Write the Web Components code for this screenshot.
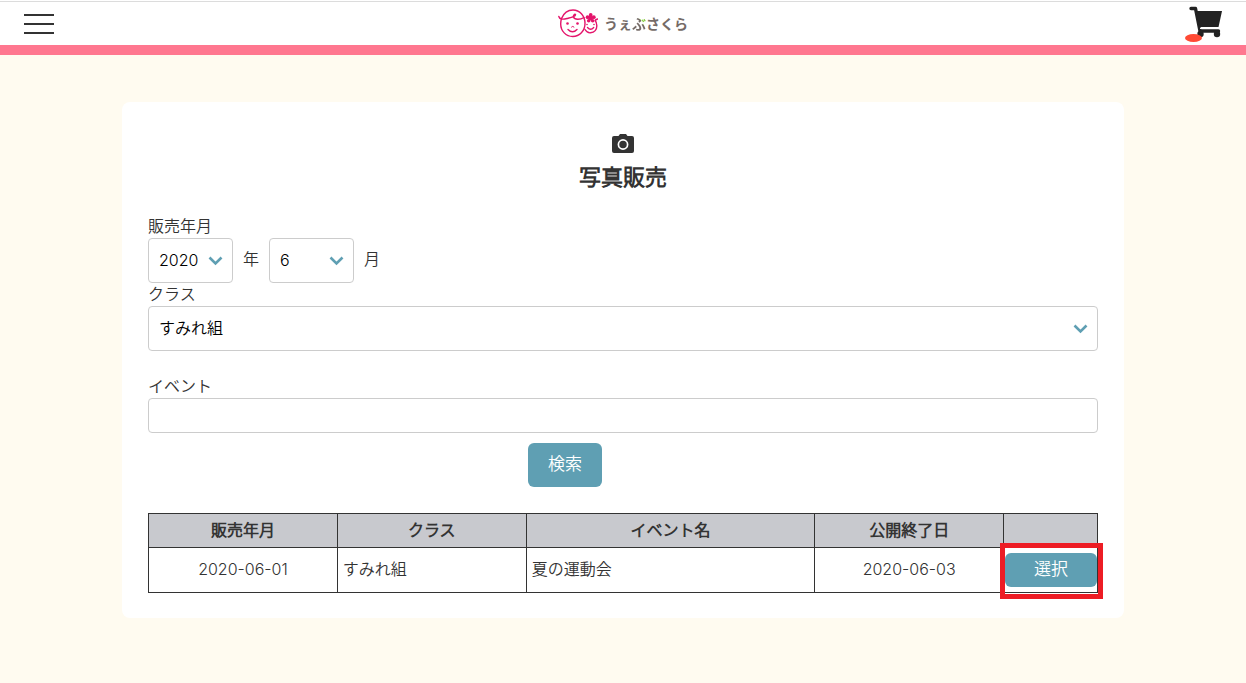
<!DOCTYPE html>
<html lang="ja">
<head>
<meta charset="utf-8">
<meta name="viewport" content="width=device-width, initial-scale=1">
<title>写真販売 | うぇぶさくら</title>
<style>
  :root { --accent: #5f9fb3; --ink: #333; --line: #ccc; }
  body { margin: 0; min-height: 100vh; background: #fffbf0; color: var(--ink);
    font: 350 16px/24px Inter, "Noto Sans CJK JP DemiLight", "Noto Sans CJK JP", sans-serif; }
</style>
</head>
<body>
<site-header></site-header>
<page-card heading="写真販売">
  <sale-search></sale-search>
  <sale-results></sale-results>
</page-card>

<template id="site-header">
  <style>
    :host { display: block; }
    header { box-sizing: border-box; height: 55px; margin-bottom: 47px; padding: 0 24px; display: grid;
      grid-template-columns: 1fr auto 1fr; align-items: center; background: #fff;
      border-bottom: 10px solid #ff778f; box-shadow: inset 0 1px #fff, inset 0 2px #dcdcdc; }
    button { border: 0; padding: 0; background: none; width: 30px; height: 22px; display: grid; margin-top: 2px; }
    svg { display: block; }
    .logo { display: flex; align-items: center; gap: 6px; color: #756b67; text-decoration: none;
      font: 700 14px/20px "Noto Sans CJK JP", sans-serif; }
    .bu { background: linear-gradient(to top right, #756b67 62%, #7ac62c 62%); -webkit-background-clip: text;
      background-clip: text; color: transparent; }
    .cart { justify-self: end; margin-top: 2px; }
  </style>
  <header>
    <button type="button" aria-label="メニュー">
      <svg width="30" height="22" viewBox="0 0 30 22"><path d="M0 2h30M0 11h30M0 20h30" stroke="#333" stroke-width="2"/></svg>
    </button>
    <a class="logo" href="#">
      <svg width="40" height="30" viewBox="0 0 40 30" fill="none" stroke="#e4146b" stroke-width="1.4" stroke-linecap="round">
        <path d="M3.500 10.500C6 4.500 10 2 15 2C21.500 2 27 7.500 27 15.500C27 23 21.500 28.500 14.700 28.500C8 28.500 2.700 23 2.700 16C2.700 14 3 12 3.500 10.500Z"/>
        <path d="M0.800 8.500C1.500 11.500 5 11.500 9 10.500C13 9.500 18 8.500 17.500 6.500C17 5.500 15 7 15.500 9C16.500 12 22 12 26 9.500"/>
        <path d="M27 21.500C28.500 24 30.500 25 32.500 24.800C36.500 24.500 39 21.500 38.800 17.500C38.700 15.500 38 13.500 37.200 12.500M37.500 12L39.500 11"/>
        <path d="M10 21.500Q14.500 26 19 21.500M29.500 19.500Q32.700 23 35.700 19.500"/>
        <path d="M13.500 19Q14.700 17.500 16 19" stroke-width="1"/>
        <g fill="#e4146b" stroke="none"><circle cx="9.500" cy="15.500" r="1.300"/><circle cx="19.500" cy="15.500" r="1.300"/><circle cx="29" cy="16.500" r="0.800"/><circle cx="36" cy="16.500" r="0.800"/>
        <circle cx="32.700" cy="7" r="1.900"/><circle cx="35.800" cy="9.200" r="1.900"/><circle cx="34.700" cy="12.700" r="1.800"/><circle cx="30.700" cy="12.700" r="1.800"/><circle cx="29.600" cy="9.200" r="1.900"/><circle cx="32.700" cy="10" r="2.400"/></g>
      </svg>
      <span>うぇ<span class="bu">ぶ</span>さくら</span>
    </a>
    <a class="cart" href="#" aria-label="カート">
      <svg width="37" height="36" viewBox="1 0 37 36">
        <path d="M7 2.500h4.500l4.500 22.500h18.500" fill="none" stroke="#222" stroke-width="3.400" stroke-linejoin="round" stroke-linecap="round"/>
        <path d="M12 5h26l-3.500 16H15.500z" fill="#222"/>
        <path d="M16 22.300h18.500" stroke="#fff" stroke-width="1.400"/>
        <circle cx="16.500" cy="28" r="3.200" fill="#222"/><circle cx="33" cy="28" r="3.200" fill="#222"/>
        <ellipse cx="9.500" cy="32" rx="8.500" ry="4" fill="#ff4a35"/>
      </svg>
    </a>
  </header>
</template>

<template id="page-card">
  <style>
    :host { display: block; margin: 0 122px 48px; }
    main { background: #fff; border-radius: 8px; padding: 30px 26px 25px; }
    svg { display: block; margin: 0 auto; }
    h1 { margin: 6px 0 23px; font-size: 22px; line-height: 30px; font-weight: 700; text-align: center; }
  </style>
  <main>
    <svg width="24" height="24" viewBox="0 0 24 24">
      <path d="M3 4h4.500l1.500-2h6l1.500 2H21a2 2 0 0 1 2 2v13a2 2 0 0 1-2 2H3a2 2 0 0 1-2-2V6a2 2 0 0 1 2-2z" fill="#333"/>
      <circle cx="12" cy="12.500" r="4.600" fill="none" stroke="#fff" stroke-width="1.700"/>
    </svg>
    <h1></h1>
    <slot></slot>
  </main>
</template>

<template id="select-field">
  <style>
    :host { display: block; position: relative; }
    select { appearance: none; box-sizing: border-box; display: block; width: 100%; height: 45px; padding: 0 32px 2px 10px;
      border: 1px solid var(--line); border-radius: 4px; background: #fff; color: #000; font: inherit; }
    svg { position: absolute; right: 10px; top: 18px; pointer-events: none; }
  </style>
  <select></select>
  <svg width="15" height="10" viewBox="0 0 15 10"><path d="M1.500 1.500l6 6 6-6" fill="none" stroke="#5f9fb3" stroke-width="2.600"/></svg>
</template>

<template id="sale-search">
  <style>
    :host { display: block; }
    .label { display: block; line-height: 23px; }
    .period { display: flex; align-items: center; gap: 10px; }
    .period select-field { width: 85px; }
    .period span { padding-bottom: 4px; }
    .event { margin-top: 24px; }
    input { box-sizing: border-box; display: block; width: 100%; height: 35px; padding: 0 10px;
      border: 1px solid var(--line); border-radius: 4px; background: #fff; font: inherit; }
    button { display: block; margin: 10px 0 26px 40%; height: 44px; padding: 0 20px 2px; border: 0; border-radius: 6px;
      background: var(--accent); color: #fff; font: inherit; font-size: 17px; font-weight: 400; }
  </style>
  <form>
    <span class="label">販売年月</span>
    <div class="period">
      <select-field label="販売年" value="2020"></select-field><span>年</span>
      <select-field label="販売月" value="6"></select-field><span>月</span>
    </div>
    <span class="label">クラス</span>
    <select-field label="クラス" value="すみれ組"></select-field>
    <label class="label event" for="event">イベント</label>
    <input id="event" type="text">
    <button type="button">検索</button>
  </form>
</template>

<template id="sale-results">
  <style>
    :host { display: block; }
    table { width: 100%; table-layout: fixed; border-collapse: collapse; }
    th, td { border: 1px solid var(--ink); padding: 0 5px 2px; }
    th { height: 31px; background: #c8c9ce; font-weight: 700; }
    td { height: 42px; }
    .date { text-align: center; }
    .action { height: 44px; padding: 0 0 0 1px; position: relative; }
    .action::after { content: ""; position: absolute; inset: -5px -6px -7px -4px; border: 5px solid #ed1c24; pointer-events: none; }
    button { display: block; width: 100%; height: 34px; border: 0; border-radius: 6px; padding: 0 0 2px;
      background: var(--accent); color: #fff; font: inherit; font-size: 17px; font-weight: 400; }
    .narrow { width: 9.9%; }
    .medium { width: 19.9%; }
  </style>
  <table>
    <colgroup><col class="medium"><col class="medium"><col><col class="medium"><col class="narrow"></colgroup>
    <thead><tr><th>販売年月</th><th>クラス</th><th>イベント名</th><th>公開終了日</th><th></th></tr></thead>
    <tbody><tr><td class="date">2020-06-01</td><td>すみれ組</td><td>夏の運動会</td><td class="date">2020-06-03</td><td class="action"><button type="button">選択</button></td></tr></tbody>
  </table>
</template>

<script>
  class TemplateElement extends HTMLElement {
    constructor() {
      super();
      this.attachShadow({ mode: "open" })
        .append(document.getElementById(this.localName).content.cloneNode(true));
    }
  }
  customElements.define("site-header", class extends TemplateElement {});
  customElements.define("page-card", class extends TemplateElement {
    connectedCallback() { this.shadowRoot.querySelector("h1").textContent = this.getAttribute("heading"); }
  });
  customElements.define("select-field", class extends TemplateElement {
    connectedCallback() {
      const select = this.shadowRoot.querySelector("select");
      select.setAttribute("aria-label", this.getAttribute("label"));
      select.replaceChildren(new Option(this.getAttribute("value")));
    }
  });
  customElements.define("sale-search", class extends TemplateElement {});
  customElements.define("sale-results", class extends TemplateElement {});
</script>
</body>
</html>
